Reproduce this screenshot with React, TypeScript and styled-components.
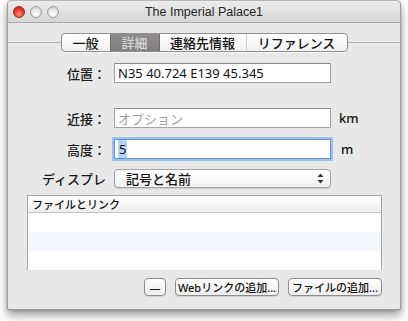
import React from "react";
import styled, { createGlobalStyle, css } from "styled-components";

const Global = createGlobalStyle`
  html, body { margin: 0; padding: 0; background: #ffffff; }
  body { font-family: "Noto Sans", "Noto Sans CJK JP", sans-serif; }
`;

const JP = `"Noto Sans", "Noto Sans CJK JP", sans-serif`;

const Page = styled.div`
  width: 408px;
  height: 321px;
  padding: 0 0 0 7px;
  box-sizing: border-box;
`;

const Window = styled.div`
  width: 394px;
  height: 310px;
  box-sizing: border-box;
  border: 1px solid #9e9e9e;
  border-top-color: #b8b8b8;
  border-radius: 5px 5px 2px 2px;
  background: #e8e8e8;
  box-shadow: 0 5px 10px rgba(0, 0, 0, 0.42), 0 0 2px rgba(0, 0, 0, 0.25);
  display: flex;
  flex-direction: column;
  overflow: hidden;
`;

const TitleBar = styled.div`
  height: 21px;
  flex: none;
  display: grid;
  grid-template-columns: 70px 1fr 70px;
  align-items: center;
  background: linear-gradient(#ececec, #d6d6d6);
  border-bottom: 1px solid #a9a9a9;
`;

const Lights = styled.div`
  display: flex;
  gap: 5px;
  padding-left: 5px;
`;

const Light = styled.span<{ $red?: boolean }>`
  width: 12px;
  height: 12px;
  border-radius: 50%;
  box-sizing: border-box;
  ${(p) =>
    p.$red
      ? css`
          background: radial-gradient(circle at 50% 70%, #ff8d80 0%, #e9382c 55%, #b81c12 100%);
          border: 1px solid #a5271f;
        `
      : css`
          background: radial-gradient(circle at 50% 70%, #ffffff 0%, #e4e4e4 55%, #c6c6c6 100%);
          border: 1px solid #9d9d9d;
        `}
`;

const Title = styled.div`
  text-align: center;
  font-family: "Liberation Sans", sans-serif;
  font-size: 12.5px;
  color: #262626;
`;

const TabRow = styled.div`
  display: flex;
  align-items: center;
  margin-top: 10px;
  height: 19px;
`;

const Rule = styled.div`
  flex: 1;
  height: 1px;
  background: #b3b3b3;
`;

const Segments = styled.div`
  display: flex;
  height: 19px;
  box-sizing: border-box;
  border: 1px solid #8f8f8f;
  border-radius: 4px;
  overflow: hidden;
  background: linear-gradient(#ffffff, #f1f1f1);
  box-shadow: 0 1px 0 rgba(255, 255, 255, 0.6);
`;

const Segment = styled.div<{ $w: number; $on?: boolean; $sep?: boolean }>`
  width: ${(p) => p.$w}px;
  display: flex;
  align-items: center;
  justify-content: center;
  font-family: ${JP};
  font-size: 13px;
  font-weight: 500;
  color: #111;
  box-sizing: border-box;
  border-left: ${(p) => (p.$sep ? "1px solid #cfcfcf" : "none")};
  ${(p) =>
    p.$on &&
    css`
      background: linear-gradient(#8d8d8d, #7e7e7e);
      color: #d6d6d6;
      border-left: 1px solid #6e6e6e;
      border-right: 1px solid #6e6e6e;
    `}
`;

const Form = styled.div`
  display: flex;
  flex-direction: column;
  margin-top: 11px;
`;

const Row = styled.div<{ $gap: number; $h?: number }>`
  display: grid;
  grid-template-columns: 98px 217px 1fr;
  column-gap: 8px;
  align-items: center;
  height: ${(p) => p.$h ?? 20}px;
  margin-top: ${(p) => p.$gap}px;
`;

const Label = styled.div`
  text-align: right;
  font-family: ${JP};
  font-size: 13px;
  font-weight: 500;
  color: #1a1a1a;
  white-space: nowrap;
`;

const Field = styled.div<{ $focus?: boolean }>`
  height: 20px;
  box-sizing: border-box;
  background: #fff;
  border: 1px solid #a3a3a3;
  border-top-color: #8a8a8a;
  padding-left: 3px;
  display: flex;
  align-items: center;
  font-family: ${JP};
  font-size: 13px;
  color: #111;
  ${(p) =>
    p.$focus &&
    css`
      border-color: #5f93d6;
      box-shadow: 0 0 0 2px #9dbfea;
    `}
`;

const Placeholder = styled.span`
  color: #a0a0a0;
`;

const Selected = styled.span`
  background: #b4d3f7;
  padding: 0 1px;
`;

const Unit = styled.div<{ $shift?: number }>`
  font-family: ${JP};
  font-size: 13px;
  font-weight: 500;
  color: #111;
  padding-left: ${(p) => p.$shift ?? 0}px;
`;

const Popup = styled.div`
  height: 19px;
  box-sizing: border-box;
  border: 1px solid #a2a2a2;
  border-radius: 4px;
  background: linear-gradient(#ffffff, #f2f2f2);
  box-shadow: 0 1px 1px rgba(0, 0, 0, 0.12);
  display: flex;
  align-items: center;
  justify-content: space-between;
  padding: 0 6px 0 11px;
  font-family: ${JP};
  font-size: 13px;
  font-weight: 500;
  color: #111;
`;

const Table = styled.div`
  margin: 7px 0 0 19px;
  width: 355px;
  height: 75px;
  box-sizing: border-box;
  border: 1px solid #a5a5a5;
  background: #fff;
  display: flex;
  flex-direction: column;
`;

const Header = styled.div`
  height: 17px;
  flex: none;
  box-sizing: border-box;
  border-bottom: 1px solid #c4c4c4;
  background: linear-gradient(#ffffff, #eeeeee);
  display: flex;
  align-items: center;
  padding-left: 4px;
  font-family: ${JP};
  font-size: 11px;
  font-weight: 500;
  color: #111;
`;

const TRow = styled.div<{ $alt?: boolean }>`
  height: 19px;
  flex: none;
  background: ${(p) => (p.$alt ? "#f3f6fa" : "#ffffff")};
`;

const Buttons = styled.div`
  display: flex;
  justify-content: flex-end;
  gap: 9px;
  margin-top: 8px;
  padding-right: 18px;
`;

const Btn = styled.div<{ $w: number }>`
  width: ${(p) => p.$w}px;
  height: 18px;
  box-sizing: border-box;
  border: 1px solid #8c8c8c;
  border-radius: 4px;
  background: linear-gradient(#ffffff, #eeeeee);
  box-shadow: 0 1px 0 rgba(0, 0, 0, 0.08);
  display: flex;
  align-items: center;
  justify-content: center;
  font-family: ${JP};
  font-size: 11px;
  font-weight: 500;
  color: #111;
  white-space: nowrap;
`;

function Arrows() {
  return (
    <svg width="7" height="11" viewBox="0 0 7 11">
      <path d="M3.5 0.5 L6.5 4 L0.5 4 Z" fill="#333" />
      <path d="M3.5 10.5 L6.5 7 L0.5 7 Z" fill="#333" />
    </svg>
  );
}

export default function App() {
  return (
    <Page>
      <Global />
      <Window>
        <TitleBar>
          <Lights>
            <Light $red />
            <Light />
            <Light />
          </Lights>
          <Title>The Imperial Palace1</Title>
          <div />
        </TitleBar>
        <TabRow>
          <Rule />
          <Segments>
            <Segment $w={48}>一般</Segment>
            <Segment $w={50} $on>詳細</Segment>
            <Segment $w={86}>連絡先情報</Segment>
            <Segment $w={101} $sep>リファレンス</Segment>
          </Segments>
          <Rule />
        </TabRow>
        <Form>
          <Row $gap={0}>
            <Label>位置：</Label>
            <Field>N35 40.724 E139 45.345</Field>
            <div />
          </Row>
          <Row $gap={25}>
            <Label>近接：</Label>
            <Field>
              <Placeholder>オプション</Placeholder>
            </Field>
            <Unit>km</Unit>
          </Row>
          <Row $gap={11}>
            <Label>高度：</Label>
            <Field $focus>
              <Selected>5</Selected>
            </Field>
            <Unit $shift={2}>m</Unit>
          </Row>
          <Row $gap={10} $h={19}>
            <Label>ディスプレ</Label>
            <Popup>
              <span>記号と名前</span>
              <Arrows />
            </Popup>
            <div />
          </Row>
        </Form>
        <Table>
          <Header>ファイルとリンク</Header>
          <TRow />
          <TRow $alt />
          <TRow />
        </Table>
        <Buttons>
          <Btn $w={22}>—</Btn>
          <Btn $w={104}>Webリンクの追加...</Btn>
          <Btn $w={94}>ファイルの追加...</Btn>
        </Buttons>
      </Window>
    </Page>
  );
}
